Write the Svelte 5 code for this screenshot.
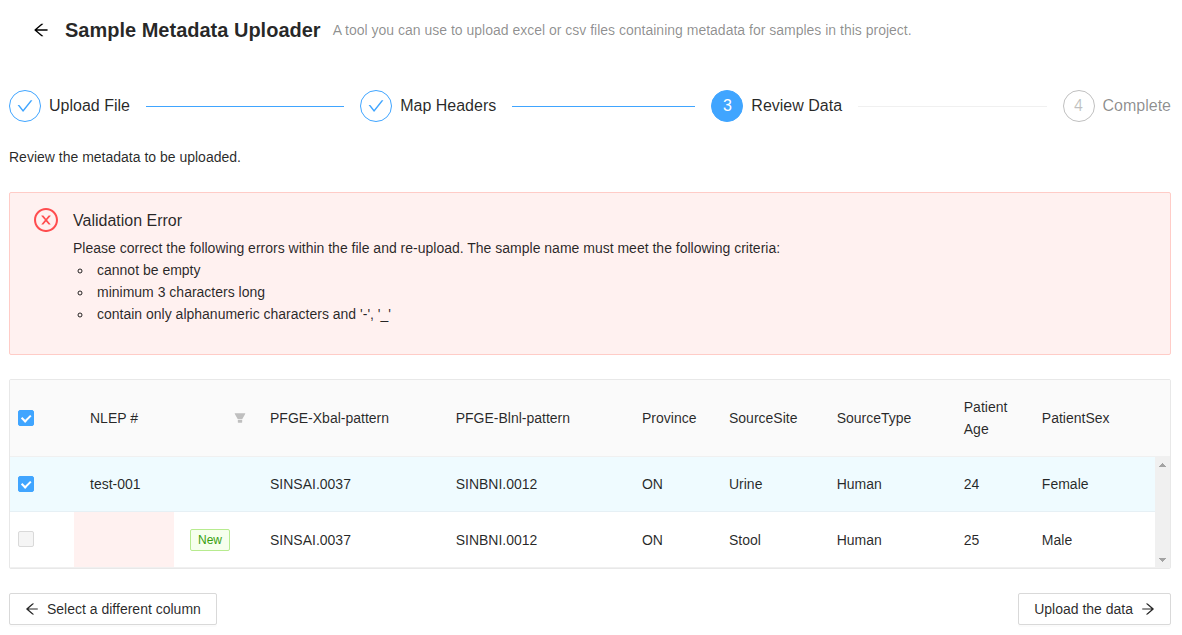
<script>
  const icons = {
    left: ['M872 474H286.9l350.2-304c5.6-4.9 2.2-14-5.2-14h-88.5c-3.9 0-7.6 1.4-10.5 3.9L155 487.8a31.96 31.96 0 000 48.3L535.1 866c1.5 1.3 3.3 2 5.2 2h91.5c7.4 0 10.8-9.2 5.2-14L286.9 550H872c4.4 0 8-3.6 8-8v-60c0-4.4-3.6-8-8-8z'],
    right: ['M869 487.8L491.2 159.9c-2.9-2.5-6.6-3.9-10.5-3.9h-88.5c-7.4 0-10.8 9.2-5.2 14l350.2 304H152c-4.4 0-8 3.6-8 8v60c0 4.4 3.6 8 8 8h585.1L386.9 854c-5.6 4.9-2.2 14 5.2 14h91.5c1.9 0 3.8-.7 5.2-2L869 536.2a32.07 32.07 0 000-48.4z'],
    check: ['M912 190h-69.9c-9.8 0-19.1 4.5-25.1 12.2L404.7 724.5 207 474a32 32 0 00-25.1-12.2H112c-6.7 0-10.4 7.7-6.3 12.9l273.9 347c12.8 16.2 37.4 16.2 50.3 0l488.4-618.9c4.1-5.1.4-12.8-6.3-12.8z'],
    error: [
      'M685.4 354.8c0-4.4-3.6-8-8-8l-66 .3L512 465.6l-99.3-118.4-66.1-.3c-4.4 0-8 3.5-8 8 0 1.9.7 3.7 1.9 5.2l130.1 155L340.5 670a8.32 8.32 0 00-1.9 5.2c0 4.4 3.6 8 8 8l66.1-.3L512 564.4l99.3 118.4 66 .3c4.4 0 8-3.5 8-8 0-1.9-.7-3.7-1.9-5.2L553.5 515l130.1-155c1.2-1.4 1.8-3.3 1.8-5.2z',
      'M512 65C264.6 65 64 265.6 64 513s200.6 448 448 448 448-200.6 448-448S759.4 65 512 65zm0 820c-205.4 0-372-166.6-372-372s166.6-372 372-372 372 166.6 372 372-166.6 372-372 372z'
    ],
    filter: ['M349 838c0 17.7 14.2 32 31.8 32h262.4c17.6 0 31.8-14.3 31.8-32V642H349v196zm531.1-684H143.9c-24.5 0-39.8 26.7-27.5 48l221.3 376h348.8l221.3-376c12.1-21.3-3.2-48-27.7-48z']
  };
  const steps = [
    { title: 'Upload File', status: 'finish' },
    { title: 'Map Headers', status: 'finish' },
    { title: 'Review Data', status: 'process' },
    { title: 'Complete', status: 'wait' }
  ];
  const criteria = ['cannot be empty', 'minimum 3 characters long', "contain only alphanumeric characters and '-', '_'"];
  const columns = ['PFGE-Xbal-pattern', 'PFGE-Blnl-pattern', 'Province', 'SourceSite', 'SourceType', 'Patient Age', 'PatientSex'];
  const rows = [
    { name: 'test-001', valid: true, cells: ['SINSAI.0037', 'SINBNI.0012', 'ON', 'Urine', 'Human', '24', 'Female'] },
    { name: '', valid: false, cells: ['SINSAI.0037', 'SINBNI.0012', 'ON', 'Stool', 'Human', '25', 'Male'] }
  ];
</script>

{#snippet icon(name, size)}
  <svg class="icon" viewBox="64 64 896 896" width={size} height={size} fill="currentColor" aria-hidden="true">
    {#each icons[name] as d}<path {d} />{/each}
  </svg>
{/snippet}

<main>
  <header>
    <span class="back">{@render icon('left', 16)}</span>
    <h1>Sample Metadata Uploader</h1>
    <span class="subtitle">A tool you can use to upload excel or csv files containing metadata for samples in this project.</span>
  </header>

  <div class="steps">
    {#each steps as step, i}
      <div class="step {step.status}">
        <span class="circle">
          {#if step.status === 'finish'}{@render icon('check', 16)}{:else}{i + 1}{/if}
        </span>
        <span class="title">{step.title}</span>
        {#if i < 3}<span class="tail"></span>{/if}
      </div>
    {/each}
  </div>

  <p class="intro">Review the metadata to be uploaded.</p>

  <section class="alert">
    <span class="alert-icon">{@render icon('error', 24)}</span>
    <div>
      <h2>Validation Error</h2>
      <p>Please correct the following errors within the file and re-upload. The sample name must meet the following criteria:</p>
      <ul>
        {#each criteria as c}<li>{c}</li>{/each}
      </ul>
    </div>
  </section>

  <section class="table">
    <div class="row head">
      <div class="select"><span class="box checked"></span></div>
      <div class="cell">NLEP #</div>
      <div class="filter">{@render icon('filter', 12)}</div>
      {#each columns as c}<div class="cell">{c}</div>{/each}
    </div>
    <div class="body">
      <div class="rows">
        {#each rows as r}
          <div class="row" class:selected={r.valid} class:invalid={!r.valid}>
            <div class="select"><span class="box" class:checked={r.valid} class:disabled={!r.valid}></span></div>
            <div class="cell name">{r.name}</div>
            <div class="cell">{#if !r.valid}<span class="tag">New</span>{/if}</div>
            {#each r.cells as c}<div class="cell">{c}</div>{/each}
          </div>
        {/each}
      </div>
      <div class="scrollbar">
        <svg width="7" height="4" viewBox="0 0 7 4" shape-rendering="crispEdges"><path d="M3 0h1v1h1v1h1v1h1v1H0V3h1V2h1V1h1z" /></svg>
        <svg width="7" height="4" viewBox="0 0 7 4" shape-rendering="crispEdges"><path d="M0 0h7v1H6v1H5v1H4v1H3V3H2V2H1V1H0z" /></svg>
      </div>
    </div>
  </section>

  <footer>
    <button>{@render icon('left', 14)}<span>Select a different column</span></button>
    <button><span>Upload the data</span>{@render icon('right', 14)}</button>
  </footer>
</main>

<style>
  :global(body) { background: #fff; overflow: hidden; }
  main {
    box-sizing: border-box;
    width: 1182px;
    height: 635px;
    padding: 14px 11px 0 9px;
    font: 14px/22px "Liberation Sans", Arial, sans-serif;
    color: rgba(0, 0, 0, 0.85);
  }
  h1, h2, p, ul { margin: 0; font-weight: 400; }
  .icon { display: block; flex: none; }
  header { display: flex; align-items: center; height: 32px; padding-left: 24px; }
  .back { margin-right: 16px; color: #000; }
  h1 { font-size: 20px; line-height: 32px; font-weight: 700; margin-right: 12px; white-space: nowrap; }
  .subtitle { color: rgba(0, 0, 0, 0.45); white-space: nowrap; }

  .steps { display: flex; margin-top: 44px; }
  .step { display: flex; flex: 1; align-items: center; font-size: 16px; line-height: 32px; margin-right: 16px; }
  .step:last-child { flex: none; margin-right: 0; }
  .circle {
    box-sizing: border-box;
    display: flex;
    align-items: center;
    justify-content: center;
    width: 32px;
    height: 32px;
    border: 1px solid #40a5ff;
    border-radius: 50%;
    color: #40a5ff;
    margin-right: 8px;
  }
  .title { white-space: nowrap; height: 32px; line-height: 31px; }
  .tail { flex: 1; height: 1px; margin-left: 16px; background: #40a5ff; margin-top: 1px; }
  .process .circle { background: #40a5ff; color: #fff; }
  .process .tail { background: #f0f0f0; }
  .wait .circle { border-color: rgba(0, 0, 0, 0.25); color: rgba(0, 0, 0, 0.25); }
  .wait .title { color: rgba(0, 0, 0, 0.45); }

  .intro { margin-top: 24px; }
  .alert {
    box-sizing: border-box;
    display: flex;
    height: 163px;
    margin-top: 24px;
    padding: 15px 24px;
    background: #fff1f0;
    border: 1px solid #ffccc7;
    border-radius: 2px;
  }
  .alert-icon { width: 24px; margin-right: 15px; color: #ff4d4f; }
  h2 { font-size: 16px; line-height: 25px; margin-bottom: 4px; }
  ul { padding-left: 20px; list-style: circle; }
  li { padding-left: 4px; }

  .table {
    box-sizing: border-box;
    height: 190px;
    margin-top: 24px;
    border: 1px solid #e8e8e8;
    border-radius: 2px;
    overflow: hidden;
  }
  .row {
    box-sizing: border-box;
    display: grid;
    grid-template-columns: 64px 100px 80px 185.7px 186.3px 87px 107.7px 127.1px 78.1px 129.1px;
    align-items: center;
    height: 55px;
    border-bottom: 1px solid #f0f0f0;
  }
  .head { height: 77px; background: #fafafa; }
  .selected { background: #effbff; border-color: #e6f0f5; }
  .invalid { height: 56px; }
  .invalid .name { align-self: stretch; background: #fff1f0; }
  .cell { padding: 0 16px; }
  .select { padding-left: 8px; }
  .filter { display: flex; justify-content: flex-end; padding-right: 8px; color: #bfbfbf; }
  .box {
    box-sizing: border-box;
    display: block;
    position: relative;
    width: 16px;
    height: 16px;
    border: 1px solid #d9d9d9;
    border-radius: 2px;
    background: #fff;
  }
  .invalid .box { margin-bottom: 1px; }
  .disabled { background: #f5f5f5; }
  .checked { background: #40a5ff; border-color: #40a5ff; }
  .checked::after {
    content: "";
    box-sizing: border-box;
    position: absolute;
    top: 50%;
    left: 22%;
    width: 5.71px;
    height: 9.14px;
    border: 2px solid #fff;
    border-top: 0;
    border-left: 0;
    transform: rotate(45deg) scale(1) translate(-50%, -50%);
  }
  .tag {
    display: block;
    width: max-content;
    padding: 0 7px;
    border: 1px solid #b7eb8f;
    border-radius: 2px;
    background: #f6ffed;
    color: #389e0d;
    font-size: 12px;
    line-height: 20px;
  }
  .body { display: flex; }
  .rows { width: 1145px; overflow: hidden; }
  .scrollbar {
    box-sizing: border-box;
    display: flex;
    flex: 1;
    flex-direction: column;
    justify-content: space-between;
    align-items: center;
    padding: 6px 0 6px;
    background: #f0f0f0;
    fill: #a3a3a3;
  }
  footer { display: flex; justify-content: space-between; margin-top: 24px; }
  button {
    box-sizing: border-box;
    display: flex;
    align-items: center;
    gap: 8px;
    height: 32px;
    padding: 0 15px;
    border: 1px solid #d9d9d9;
    border-radius: 2px;
    background: #fff;
    box-shadow: 0 2px 0 rgba(0, 0, 0, 0.015);
    font: inherit;
    color: inherit;
  }
</style>
